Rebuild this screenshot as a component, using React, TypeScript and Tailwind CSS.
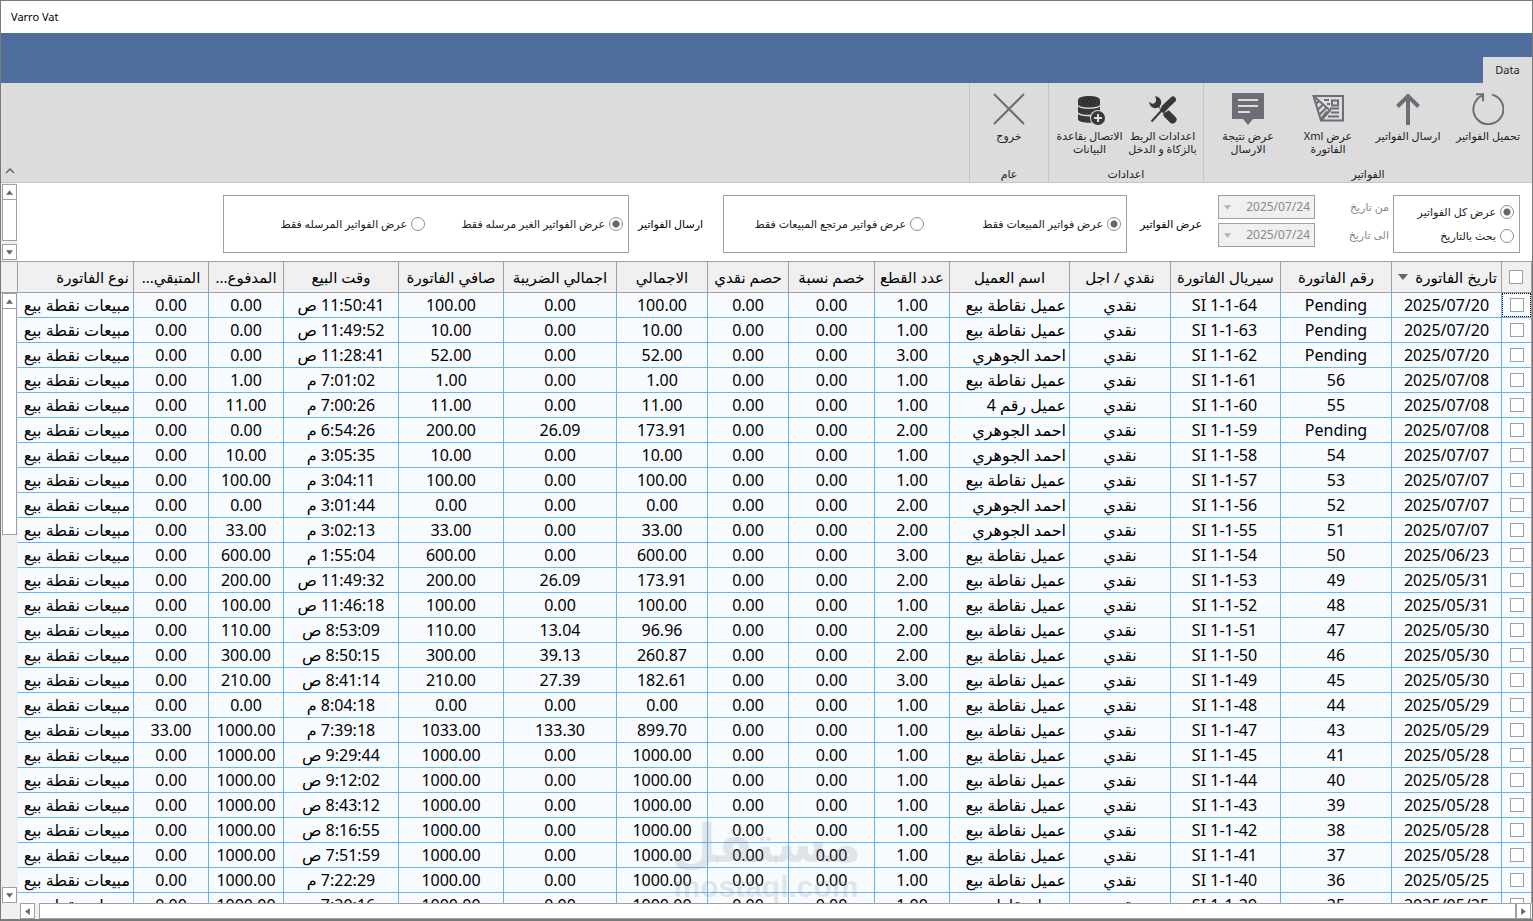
import { useState, type ReactNode } from "react";
import { clsx } from "clsx";

type Invoice = {
  date: string;
  no: string;
  serial: string;
  customer: string;
  qty: string;
  total: string;
  tax: string;
  net: string;
  time: string;
  paid: string;
  rest: string;
};

const POS = "عميل نقاطة بيع";
const AHMED = "احمد الجوهري";

const rows: string[][] = [
  ["2025/07/20", "Pending", "64", POS, "1.00", "100.00", "0.00", "100.00", "11:50:41 ص", "0.00", "0.00"],
  ["2025/07/20", "Pending", "63", POS, "1.00", "10.00", "0.00", "10.00", "11:49:52 ص", "0.00", "0.00"],
  ["2025/07/20", "Pending", "62", AHMED, "3.00", "52.00", "0.00", "52.00", "11:28:41 ص", "0.00", "0.00"],
  ["2025/07/08", "56", "61", POS, "1.00", "1.00", "0.00", "1.00", "7:01:02 م", "1.00", "0.00"],
  ["2025/07/08", "55", "60", "عميل رقم 4", "1.00", "11.00", "0.00", "11.00", "7:00:26 م", "11.00", "0.00"],
  ["2025/07/08", "Pending", "59", AHMED, "2.00", "173.91", "26.09", "200.00", "6:54:26 م", "0.00", "0.00"],
  ["2025/07/07", "54", "58", AHMED, "1.00", "10.00", "0.00", "10.00", "3:05:35 م", "10.00", "0.00"],
  ["2025/07/07", "53", "57", POS, "1.00", "100.00", "0.00", "100.00", "3:04:11 م", "100.00", "0.00"],
  ["2025/07/07", "52", "56", AHMED, "2.00", "0.00", "0.00", "0.00", "3:01:44 م", "0.00", "0.00"],
  ["2025/07/07", "51", "55", AHMED, "2.00", "33.00", "0.00", "33.00", "3:02:13 م", "33.00", "0.00"],
  ["2025/06/23", "50", "54", POS, "3.00", "600.00", "0.00", "600.00", "1:55:04 م", "600.00", "0.00"],
  ["2025/05/31", "49", "53", POS, "2.00", "173.91", "26.09", "200.00", "11:49:32 ص", "200.00", "0.00"],
  ["2025/05/31", "48", "52", POS, "1.00", "100.00", "0.00", "100.00", "11:46:18 ص", "100.00", "0.00"],
  ["2025/05/30", "47", "51", POS, "2.00", "96.96", "13.04", "110.00", "8:53:09 ص", "110.00", "0.00"],
  ["2025/05/30", "46", "50", POS, "2.00", "260.87", "39.13", "300.00", "8:50:15 ص", "300.00", "0.00"],
  ["2025/05/30", "45", "49", POS, "3.00", "182.61", "27.39", "210.00", "8:41:14 ص", "210.00", "0.00"],
  ["2025/05/29", "44", "48", POS, "1.00", "0.00", "0.00", "0.00", "8:04:18 م", "0.00", "0.00"],
  ["2025/05/29", "43", "47", POS, "1.00", "899.70", "133.30", "1033.00", "7:39:18 م", "1000.00", "33.00"],
  ["2025/05/28", "41", "45", POS, "1.00", "1000.00", "0.00", "1000.00", "9:29:44 ص", "1000.00", "0.00"],
  ["2025/05/28", "40", "44", POS, "1.00", "1000.00", "0.00", "1000.00", "9:12:02 ص", "1000.00", "0.00"],
  ["2025/05/28", "39", "43", POS, "1.00", "1000.00", "0.00", "1000.00", "8:43:12 ص", "1000.00", "0.00"],
  ["2025/05/28", "38", "42", POS, "1.00", "1000.00", "0.00", "1000.00", "8:16:55 ص", "1000.00", "0.00"],
  ["2025/05/28", "37", "41", POS, "1.00", "1000.00", "0.00", "1000.00", "7:51:59 ص", "1000.00", "0.00"],
  ["2025/05/25", "36", "40", POS, "1.00", "1000.00", "0.00", "1000.00", "7:22:29 م", "1000.00", "0.00"],
  ["2025/05/25", "35", "39", POS, "1.00", "1000.00", "0.00", "1000.00", "7:20:16 م", "1000.00", "0.00"],
];

const invoices: Invoice[] = rows.map((r) => ({
  date: r[0],
  no: r[1],
  serial: `SI 1-1-${r[2]}`,
  customer: r[3],
  qty: r[4],
  total: r[5],
  tax: r[6],
  net: r[7],
  time: r[8],
  paid: r[9],
  rest: r[10],
}));

const columns = [
  { label: "تاريخ الفاتورة", width: "w-[110px]", sorted: true },
  { label: "رقم الفاتورة", width: "w-[111px]" },
  { label: "سيريال الفاتورة", width: "w-[110px]" },
  { label: "نقدي / اجل", width: "w-[101px]" },
  { label: "اسم العميل", width: "w-[120px]" },
  { label: "عدد القطع", width: "w-[75px]" },
  { label: "خصم نسبة", width: "w-[86px]" },
  { label: "حصم نقدي", width: "w-[81px]" },
  { label: "الاجمالي", width: "w-[91px]" },
  { label: "اجمالي الضريبة", width: "w-[113px]" },
  { label: "صافي الفاتورة", width: "w-[105px]" },
  { label: "وقت البيع", width: "w-[115px]" },
  { label: "المدفوع...", width: "w-[75px]" },
  { label: "المتبقي...", width: "w-[75px]" },
  { label: "نوع الفاتورة", width: "text-right" },
];

function ReloadIcon() {
  return (
    <svg viewBox="0 0 32 32" className="h-8 w-8" fill="none" stroke="#6d6e75" strokeWidth="2">
      <path d="M20 1.6A15 15 0 1 1 10 2.6" />
      <path d="M4 1.2h7v7" />
    </svg>
  );
}

function SendIcon() {
  return (
    <svg viewBox="0 0 32 32" className="h-8 w-8" fill="none" stroke="#6d6e75" strokeWidth="4">
      <path d="M16 32V3" />
      <path d="M5.500 13.500L16 3l10.500 10.500" />
    </svg>
  );
}

function XmlIcon() {
  return (
    <svg viewBox="0 0 32 32" className="h-8 w-8" fill="none" stroke="#6d6e75" strokeWidth="2">
      <path d="M1.500 3H31v24.500H9z" />
      <path d="M1.500 3L18 17.500 9 27.500" />
      <path d="M4.500 10.500l3-3M6 16.500l5.500-5.500M7.500 21.500l7-7M9 26l6-8" />
      <path d="M12 7h5M15 11h3M20 7.500h6v5h-6zM18 15.500h9M19 19.500h8M16 23.500h11" />
    </svg>
  );
}

function ResultIcon() {
  return (
    <svg viewBox="0 0 32 32" className="h-8 w-8">
      <path d="M0 0h32v26H21l-5 6-5-6H0z" fill="#6d6e75" />
      <path d="M6 7h20M6 13h20M6 19h12" stroke="#dcdcdc" strokeWidth="2" />
    </svg>
  );
}

function ToolsIcon() {
  return (
    <svg viewBox="0 0 32 32" className="h-8 w-8">
      <path d="M8.500 9.500L26 27" stroke="#38383a" strokeWidth="3" />
      <path d="M20.500 21.500l5 5" stroke="#38383a" strokeWidth="8" strokeLinecap="round" />
      <path d="M8 3.200A6 6 0 1 1 2.300 8.500c2 3 5.200 2.600 6.200.8S9 5 8 3.200z" fill="#38383a" />
      <path d="M4 29.500L17 16" stroke="#dcdcdc" strokeWidth="4" />
      <path d="M17 15L26 6" stroke="#dcdcdc" strokeWidth="9" strokeLinecap="round" />
      <path d="M4.500 28.500L16 16" stroke="#38383a" strokeWidth="2" />
      <path d="M17.500 14.500L26 6.500" stroke="#38383a" strokeWidth="6" strokeLinecap="round" />
      <path d="M12.500 16.500l4 4 4-4.500-4-3.500z" fill="#38383a" />
    </svg>
  );
}

function DatabaseIcon() {
  return (
    <svg viewBox="0 0 32 32" className="h-8 w-8">
      <path d="M4 7c0-5.500 22-5.500 22 0v4.500c0 4-22 4-22 0z" fill="#38383a" />
      <path d="M4 13.500c3 3.200 19 3.200 22 0V19c-2 3.800-20 3.800-22 0z" fill="#38383a" />
      <path d="M4 21c3 3.200 19 3.200 22 0v5.500c-2 4.300-20 4.300-22 0z" fill="#38383a" />
      <path d="M9 8.500h13M10.500 6h10M10.500 11h10" stroke="#111" strokeWidth="1" strokeDasharray="1 3" />
      <circle cx="24" cy="25" r="8" fill="#dcdcdc" />
      <circle cx="24" cy="25" r="7" fill="#38383a" />
      <path d="M24 21v8M20 25h8" stroke="#dcdcdc" strokeWidth="2" />
    </svg>
  );
}

function ExitIcon() {
  return (
    <svg viewBox="0 0 32 32" className="h-8 w-8" stroke="#6d6e75" strokeWidth="2">
      <path d="M1 1l30 30M31 1L1 31" />
    </svg>
  );
}

function RibbonButton({ icon, label, className }: { icon: ReactNode; label: string; className: string }) {
  return (
    <button type="button" className={clsx("flex flex-col items-center", className)}>
      {icon}
      <span className="mt-1 text-[11px] leading-[13px]">{label}</span>
    </button>
  );
}

function RibbonGroup({ title, children }: { title: string; children: ReactNode }) {
  return (
    <section className="flex flex-col border-l border-[#c6c6c6] pt-[10px]">
      <div className="flex grow items-start">{children}</div>
      <h2 className="pb-[2px] text-center text-[11px] leading-[13px]">{title}</h2>
    </section>
  );
}

function Radio({ name, label, on }: { name: string; label: string; on?: boolean }) {
  return (
    <label className="flex items-center gap-1 whitespace-nowrap">
      <input
        type="radio"
        name={name}
        defaultChecked={on}
        className="h-[14px] w-[14px] shrink-0 appearance-none rounded-full border border-[#8d8d8d] bg-white checked:bg-[radial-gradient(circle,#666_0_3px,#fff_4px)]"
      />
      {label}
    </label>
  );
}

function DateField({ id, label }: { id: string; label: string }) {
  return (
    <div className="flex h-6 items-center justify-between text-[#8a8a8a]">
      <label htmlFor={id}>{label}</label>
      <div className="flex h-6 w-[97px] items-center border border-[#a0a0a0] bg-[#f0f0f0]">
        <input id={id} disabled dir="ltr" defaultValue="2025/07/24" className="w-[74px] min-w-0 grow pr-1 text-right text-xs" />
        <span className="flex w-4 justify-center">
          <Arrow dir="down" color="fill-[#b0b0b0]" />
        </span>
      </div>
    </div>
  );
}

const arrows = {
  up: "M0 5l3-4 3 4z",
  down: "M0 1h6L3 5z",
  left: "M5 0v6L1 3z",
  right: "M1 0v6l4-3z",
};

function Arrow({ dir, color = "fill-[#666]" }: { dir: keyof typeof arrows; color?: string }) {
  return (
    <svg viewBox="0 0 6 6" className={clsx("h-[7px] w-[7px]", color)}>
      <path d={arrows[dir]} />
    </svg>
  );
}

function ScrollButton({ dir }: { dir: keyof typeof arrows }) {
  return (
    <button
      type="button"
      aria-label={dir}
      className="flex h-4 w-[15px] shrink-0 items-center justify-center border border-[#a0a0a0] bg-white"
    >
      <Arrow dir={dir} />
    </button>
  );
}

function Tick({ label }: { label: string }) {
  return (
    <input
      type="checkbox"
      aria-label={label}
      className="block h-[14px] w-[14px] appearance-none border border-[#a0a0a0] bg-white checked:bg-[#666]"
    />
  );
}

export default function App() {
  const [open, setOpen] = useState(true);

  return (
    <div
      dir="rtl"
      className="flex h-screen flex-col overflow-hidden border border-b-2 border-[#7a7a7a] bg-white font-['Noto_Sans','DejaVu_Sans',sans-serif] text-black"
    >
      <header dir="ltr" className="flex h-8 shrink-0 items-center px-[10px] text-[11px]">
        Varro Vat
      </header>

      <nav className="flex h-[50px] shrink-0 items-end bg-[#4f6e9d]">
        <button type="button" className="h-[26px] w-[49px] bg-[#dcdcdc] text-[11px] text-[#222]">
          Data
        </button>
      </nav>

      <div className="flex h-[100px] shrink-0 border-b border-[#c6c6c6] bg-[#dcdcdc] text-[#222]">
        {open && (
          <>
            <RibbonGroup title="الفواتير">
              <div className="flex px-1">
                <RibbonButton icon={<ReloadIcon />} label="تحميل الفواتير" className="w-20" />
                <RibbonButton icon={<SendIcon />} label="ارسال الفواتير" className="w-20" />
                <RibbonButton icon={<XmlIcon />} label="عرض Xml الفاتورة" className="w-20 px-3" />
                <RibbonButton icon={<ResultIcon />} label="عرض نتيجة الارسال" className="w-20 px-3" />
              </div>
            </RibbonGroup>
            <RibbonGroup title="اعدادات">
              <div className="flex px-1">
                <RibbonButton icon={<ToolsIcon />} label="اعدادات الربط بالزكاة و الدخل" className="w-[73px]" />
                <RibbonButton icon={<DatabaseIcon />} label="الاتصال بقاعدة البيانات" className="w-[73px]" />
              </div>
            </RibbonGroup>
            <RibbonGroup title="عام">
              <RibbonButton icon={<ExitIcon />} label="خروج" className="w-[78px]" />
            </RibbonGroup>
          </>
        )}
        <button type="button" aria-label="طي" onClick={() => setOpen(!open)} className="mr-auto self-end p-1 pb-2">
          <svg viewBox="0 0 10 6" className="h-[6px] w-[10px]" fill="none" stroke="#666" strokeWidth="1.5">
            <path d="M1 5l4-4 4 4" />
          </svg>
        </button>
      </div>

      <div className="flex h-[78px] shrink-0 text-[11px]">
        <form className="flex grow items-start pt-3 pr-3">
          <fieldset className="flex h-[58px] w-[127px] flex-col justify-between border border-[#a0a0a0] px-[5px] py-2 text-[#222]">
            <Radio name="range" label="عرض كل الفواتير" on />
            <Radio name="range" label="بحث بالتاريخ" />
          </fieldset>
          <div className="mr-1 flex w-[171px] flex-col gap-1">
            <DateField id="from" label="من تاريخ" />
            <DateField id="to" label="الى تاريخ" />
          </div>
          <span className="w-[91px] self-start pr-4 leading-[58px]">عرض الفواتير</span>
          <fieldset className="flex h-[58px] w-[404px] items-center border border-[#a0a0a0] pr-[5px] text-[#222]">
            <div className="flex w-[197px]">
              <Radio name="kind" label="عرض فواتير المبيعات فقط" on />
            </div>
            <Radio name="kind" label="عرض فواتير مرتجع المبيعات فقط" />
          </fieldset>
          <span className="w-[94px] self-start pr-5 leading-[58px]">ارسال الفواتير</span>
          <fieldset className="flex h-[58px] w-[406px] items-center border border-[#a0a0a0] pr-[5px] text-[#222]">
            <div className="flex w-[198px]">
              <Radio name="sent" label="عرض الفواتير الغير مرسله فقط" on />
            </div>
            <Radio name="sent" label="عرض الفواتير المرسله فقط" />
          </fieldset>
        </form>
        <div className="flex w-4 flex-col items-start bg-[#f0f0f0] py-[1px]">
          <ScrollButton dir="up" />
          <div className="-mt-px mb-[3px] w-[15px] grow border border-[#a0a0a0] bg-white" />
          <ScrollButton dir="down" />
        </div>
      </div>

      <main className="relative flex min-h-0 grow border-r border-[#a0a0a0]">
        <div className="min-w-0 grow overflow-hidden">
          <table className="w-full table-fixed border-separate border-spacing-0 text-base leading-6">
            <thead className="bg-[#f0f0f0]">
              <tr className="h-8">
                <th className="w-[30px] border border-r-0 border-[#a0a0a0] px-2">
                  <Tick label="تحديد الكل" />
                </th>
                {columns.map((c) => (
                  <th
                    key={c.label}
                    className={clsx(
                      "overflow-hidden border-y border-l border-[#a0a0a0] px-1 text-[15px] font-normal whitespace-nowrap",
                      c.width,
                    )}
                  >
                    {c.sorted ? (
                      <span className="flex items-center justify-between pl-[2px]">
                        {c.label}
                        <svg viewBox="0 0 10 6" className="h-[6px] w-[10px] fill-[#666]">
                          <path d="M0 0h10L5 6z" />
                        </svg>
                      </span>
                    ) : (
                      c.label
                    )}
                  </th>
                ))}
              </tr>
            </thead>
            <tbody className="bg-[#f7fbff]">
              {invoices.map((r, i) => (
                <tr
                  key={r.serial}
                  className="h-[25px] text-center *:border-b *:border-l *:border-[#66b3f5] *:p-0 *:whitespace-nowrap *:last:border-l-[#f0f0f0]"
                >
                  <td>
                    <div
                      className={clsx(
                        "flex h-6 items-center border border-dotted px-[6px]",
                        i === 0 ? "border-black" : "border-transparent",
                      )}
                    >
                      <Tick label={r.serial} />
                    </div>
                  </td>
                  <td>{r.date}</td>
                  <td>{r.no}</td>
                  <td dir="ltr">{r.serial}</td>
                  <td>نقدي</td>
                  <td className="text-right">
                    <span className="px-[3px]">{r.customer}</span>
                  </td>
                  <td>{r.qty}</td>
                  <td>0.00</td>
                  <td>0.00</td>
                  <td>{r.total}</td>
                  <td>{r.tax}</td>
                  <td>{r.net}</td>
                  <td>{r.time}</td>
                  <td>{r.paid}</td>
                  <td>{r.rest}</td>
                  <td className="text-right">
                    <span className="px-[3px]">مبيعات نقطة بيع</span>
                  </td>
                </tr>
              ))}
            </tbody>
          </table>
        </div>
        <div className="flex w-4 shrink-0 flex-col items-start bg-[#f0f0f0]">
          <div className="h-8 w-full shrink-0 border-y border-[#a0a0a0]" />
          <ScrollButton dir="up" />
          <div className="-mt-px h-[227px] w-[15px] border border-[#a0a0a0] bg-white" />
          <div className="grow" />
          <ScrollButton dir="down" />
        </div>

        <div className="pointer-events-none absolute bottom-0 left-[671px] flex w-[188px] flex-col items-center font-bold text-[#888]/20">
          <span className="text-[52px] leading-[58px]">مستقل</span>
          <span className="font-['Liberation_Sans',sans-serif] text-[30px] leading-8">mostaql.com</span>
        </div>
      </main>

      <div dir="ltr" className="flex h-4 shrink-0 bg-[#f0f0f0] pr-px pl-[19px]">
        <ScrollButton dir="left" />
        <div className="ml-1 grow border border-[#a0a0a0] bg-white" />
        <ScrollButton dir="right" />
      </div>
    </div>
  );
}
